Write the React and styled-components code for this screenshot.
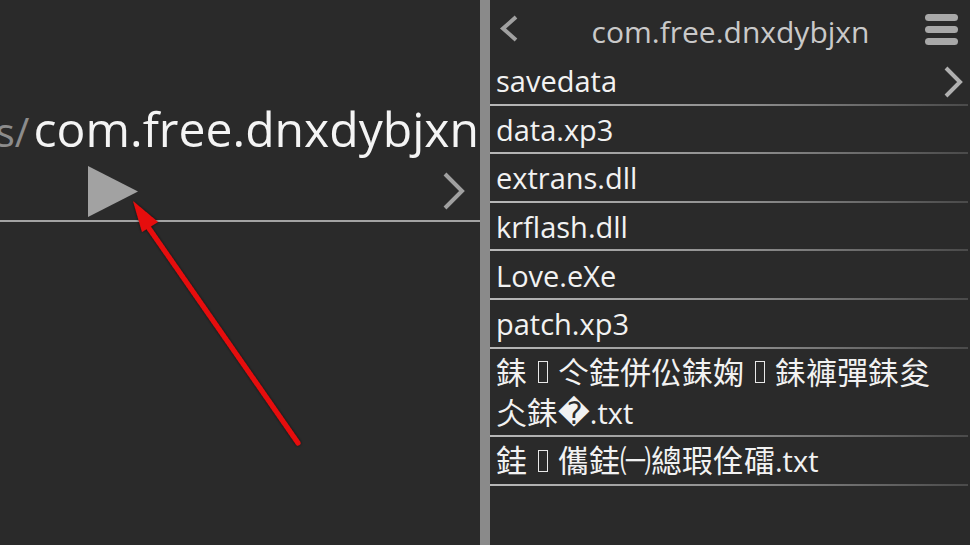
import styled, { createGlobalStyle } from "styled-components";

const Global = createGlobalStyle`
	html, body {
		margin: 0;
		padding: 0;
		background-color: #2a2a2a;
	}
	* {
		box-sizing: border-box;
	}
`;

const files = [
	{ name: "savedata", folder: true },
	{ name: "data.xp3" },
	{ name: "extrans.dll" },
	{ name: "krflash.dll" },
	{ name: "Love.eXe" },
	{ name: "patch.xp3" },
];

export default function App() {
	return (
		<>
			<Global />
			<Screen>
				<LeftPanel>
					<PathRow>
						<PathPrefix>/sdcard/games/</PathPrefix>
						<PathName>com.free.dnxdybjxn</PathName>
					</PathRow>
					<ControlRow>
						<PlayIcon viewBox="0 0 50 51">
							<polygon points="0,0 50,25.5 0,51" fill="#a2a2a2" />
						</PlayIcon>
						<ChevronIcon viewBox="0 0 24 38" $w={24} $h={38}>
							<polyline points="3,2 20,19 3,36" />
						</ChevronIcon>
					</ControlRow>
					<Rule />
				</LeftPanel>

				<Divider />

				<RightPanel>
					<TopBar>
						<ChevronIcon viewBox="0 0 20 27" $w={20} $h={27}>
							<polyline points="17,2 4,13.5 17,25" />
						</ChevronIcon>
						<Title>com.free.dnxdybjxn</Title>
						<Burger>
							<span />
							<span />
							<span />
						</Burger>
					</TopBar>

					{files.map((f) => (
						<Item key={f.name}>
							<Row>
								{f.name}
								{f.folder && (
									<RowChevron viewBox="0 0 20 32" $w={20} $h={32}>
										<polyline points="3,2 17,16 3,30" />
									</RowChevron>
								)}
							</Row>
							<Separator />
						</Item>
					))}

					<Item>
						<Row>
							<Cjk>
								銇<Tofu />仒銈併伀銇婅<Tofu />銇褲彈銇夋仌銇�
							</Cjk>
							.txt
						</Row>
						<Separator />
					</Item>
					<Item>
						<Row>
							<Cjk>
								銈<Tofu />儶銈㈠總瑕佺礌
							</Cjk>
							.txt
						</Row>
						<Separator />
					</Item>
				</RightPanel>

				<Arrow viewBox="0 0 480 545">
					<defs>
						<filter id="shadow" x="-20%" y="-20%" width="140%" height="140%">
							<feDropShadow dx="0" dy="0" stdDeviation="1.6" floodColor="#000" floodOpacity="0.7" />
						</filter>
					</defs>
					<g filter="url(#shadow)">
						<line x1="298" y1="443" x2="146" y2="224" stroke="#e60d0d" strokeWidth="5" strokeLinecap="round" />
						<polygon points="133,201 158,222 142,232" fill="#e60d0d" />
					</g>
				</Arrow>
			</Screen>
		</>
	);
}

const Screen = styled.div`
	position: relative;
	width: 970px;
	height: 545px;
	display: flex;
	overflow: hidden;
	background-color: #2a2a2a;
	font-family: "Open Sans", "Noto Sans", "Noto Sans CJK SC", "DejaVu Sans", sans-serif;
`;

const LeftPanel = styled.div`
	width: 480px;
	display: flex;
	flex-direction: column;
	padding-top: 97px;
`;

const PathRow = styled.div`
	display: flex;
	justify-content: flex-end;
	align-items: baseline;
	white-space: nowrap;
	overflow: hidden;
	height: 64px;
	line-height: 64px;
	padding-right: 1px;
`;

const PathPrefix = styled.span`
	font-size: 40px;
	color: #8c8c8c;
	margin-right: 4px;
`;

const PathName = styled.span`
	font-size: 48.1px;
	color: #f4f4f4;
`;

const ControlRow = styled.div`
	height: 59px;
	display: flex;
	justify-content: space-between;
	align-items: center;
	padding: 0 14px 0 88px;
`;

const PlayIcon = styled.svg`
	width: 50px;
	height: 51px;
	margin-top: 2px;
`;

const ChevronIcon = styled.svg`
	width: ${(p) => p.$w}px;
	height: ${(p) => p.$h}px;
	fill: none;
	stroke: #a0a0a0;
	stroke-width: 4;
`;

const Rule = styled.div`
	height: 2px;
	background-color: #a3a3a3;
`;

const Divider = styled.div`
	width: 10px;
	background-color: #8a8a8a;
`;

const RightPanel = styled.div`
	flex: 1;
	display: flex;
	flex-direction: column;
`;

const TopBar = styled.div`
	height: 57px;
	display: grid;
	grid-template-columns: 1fr auto 1fr;
	align-items: center;
	padding: 0 12px 0 9px;

	& > :last-child {
		justify-self: end;
	}
`;

const Title = styled.div`
	font-size: 30px;
	color: #c9c9c9;
	padding-top: 5px;
	margin-left: 4px;
`;

const Burger = styled.div`
	width: 33px;
	display: flex;
	flex-direction: column;
	gap: 5px;
	margin-top: 2px;

	span {
		display: block;
		height: 7px;
		border-radius: 4px;
		background-color: #a8a8a8;
	}
`;

const Item = styled.div`
	display: flex;
	flex-direction: column;
`;

const Row = styled.div`
	position: relative;
	padding: 4.3px 40px 2.3px 6px;
	font-size: 29px;
	line-height: 40px;
	color: #f2f2f2;
`;

const RowChevron = styled(ChevronIcon)`
	position: absolute;
	right: 7px;
	top: 9px;
	stroke: #b0b0b0;
`;

const Cjk = styled.span`
	font-family: "Noto Sans CJK SC", "DejaVu Sans", sans-serif;
	font-size: 31px;
	line-height: 30px;
`;

const Tofu = styled.span`
	display: inline-block;
	width: 1em;
	height: 1em;
	vertical-align: -0.12em;
	position: relative;

	&::after {
		content: "";
		position: absolute;
		left: 50%;
		top: 50%;
		width: 8px;
		height: 20px;
		transform: translate(-50%, -50%);
		border: 1.5px solid #e8e8e8;
	}
`;

const Separator = styled.div`
	height: 2px;
	margin-right: 2px;
	background: linear-gradient(to right, #b8b8b8, #8c8c8c 55%, #4a4a4a);
`;

const Arrow = styled.svg`
	position: absolute;
	left: 0;
	top: 0;
	width: 480px;
	height: 545px;
	pointer-events: none;
`;
